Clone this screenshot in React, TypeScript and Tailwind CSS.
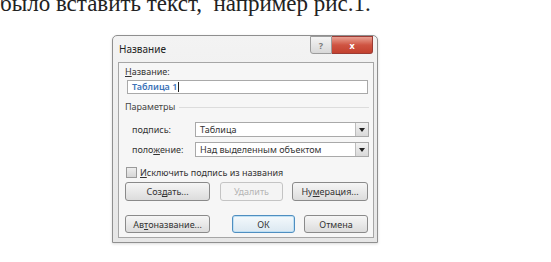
import type { ReactNode } from 'react';

const ui = { fontFamily: '"Noto Sans", "DejaVu Sans", sans-serif' };

function Btn({
  children,
  width,
  height,
  primary,
  disabled,
  ml,
}: {
  children: ReactNode;
  width: string;
  height: string;
  primary?: boolean;
  disabled?: boolean;
  ml?: string;
}) {
  return (
    <div
      className={[
        'flex items-center justify-center rounded-[3px] border text-[9px] leading-none',
        width,
        height,
        ml ?? '',
        primary
          ? 'border-[#4f8ec0] bg-gradient-to-b from-[#f4f9fc] to-[#dbe8f1] shadow-[inset_0_0_0_1px_#bfe0f4] text-[#333]'
          : disabled
          ? 'border-[#c4c4c4] bg-[#f4f4f4] text-[#b5b5b5]'
          : 'border-[#8a8a8a] bg-gradient-to-b from-[#f6f6f6] to-[#dcdcdc] text-[#333]',
      ].join(' ')}
    >
      {children}
    </div>
  );
}

function Select({ value }: { value: string }) {
  return (
    <div className="flex h-[15px] w-[174px] items-stretch border border-[#a9a9a9] bg-white">
      <span className="flex flex-1 items-center pl-[4px] text-[9px] leading-none text-[#333]">{value}</span>
      <span className="flex w-[13px] items-center justify-center border-l border-[#bdbdbd] bg-gradient-to-b from-[#f2f2f2] to-[#d9d9d9]">
        <span className="h-0 w-0 border-x-[3px] border-t-[4px] border-x-transparent border-t-[#222]" />
      </span>
    </div>
  );
}

export default function App() {
  return (
    <div className="relative h-[262px] w-[551px] overflow-hidden bg-white">
      {/* the line of document text above, cut by the top of the shot */}
      <div className="h-[20px] overflow-hidden">
        <div
          className="-mt-[8px] whitespace-pre text-[23px] leading-[23px] text-[#222]"
          style={{ fontFamily: '"Liberation Serif", "Times New Roman", serif' }}
        >
          было вставить текст,  например рис.1.
        </div>
      </div>

      {/* dialog */}
      <div
        className="ml-[112px] mt-[15px] flex h-[208px] w-[266px] flex-col rounded-t-[5px] border border-[#8f8f8f] bg-gradient-to-b from-[#f3f3f3] to-[#e6e6e6] shadow-[0_1px_3px_rgba(0,0,0,0.15)]"
        style={ui}
      >
        <div className="flex h-[26px] items-start">
          <span className="mt-[8px] pl-[6px] text-[10px] leading-none text-[#222]">Название</span>
          <div className="ml-auto mr-[4px] flex h-[18px]">
            <div className="flex w-[22px] items-center justify-center rounded-bl-[3px] border border-[#9c9c9c] bg-gradient-to-b from-[#f4f4f4] to-[#d8d8d8] text-[9px] font-bold leading-none text-[#7a7a7a]">
              ?
            </div>
            <div className="flex w-[41px] items-center justify-center rounded-br-[3px] border border-l-0 border-[#9b3b34] bg-gradient-to-b from-[#e8a093] via-[#cf5442] to-[#c2402e] text-[9px] font-bold leading-none text-white">
              x
            </div>
          </div>
        </div>

        {/* inner panel */}
        <div className="ml-[5px] flex h-[176px] w-[256px] flex-col border border-[#a6a6a6] bg-[#f6f6f6] text-[9px] leading-[10px] text-[#333]">
          <div className="mt-[4px] pl-[6px]">
            <u>Н</u>азвание:
          </div>
          <div className="ml-[8px] mt-[3px] flex h-[14px] w-[241px] items-center border border-[#a9a9a9] bg-white pl-[4px]">
            <span className="font-semibold text-[#3d73b8]">Таблица 1</span>
            <span className="ml-px h-[10px] w-px bg-[#222]" />
          </div>

          <div className="mt-[8px] flex items-center pl-[6px] pr-[4px]">
            <span className="text-[#444]">Параметры</span>
            <span className="ml-[4px] h-px flex-1 bg-[#dcdcdc]" />
          </div>

          <div className="mt-[10px] flex items-center pl-[13px]">
            <span className="w-[63px]">
              по<u>д</u>пись:
            </span>
            <Select value="Таблица" />
          </div>
          <div className="mt-[5px] flex items-center pl-[13px]">
            <span className="w-[63px]">
              поло<u>ж</u>ение:
            </span>
            <Select value="Над выделенным объектом" />
          </div>

          <div className="mt-[10px] flex items-center pl-[7px]">
            <span className="h-[11px] w-[11px] border border-[#9a9a9a] bg-gradient-to-b from-[#eeeeee] to-[#d6d6d6]" />
            <span className="ml-[3px]">
              <u>И</u>сключить подпись из названия
            </span>
          </div>

          <div className="mt-[4px] flex pl-[6px]">
            <Btn width="w-[85px]" height="h-[19px]">
              Соз<u>д</u>ать...
            </Btn>
            <Btn width="w-[63px]" height="h-[19px]" disabled ml="ml-[10px]">
              Удалить
            </Btn>
            <Btn width="w-[76px]" height="h-[19px]" ml="ml-[9px]">
              Ну<u>м</u>ерация...
            </Btn>
          </div>

          <div className="mt-[14px] flex pl-[6px]">
            <Btn width="w-[85px]" height="h-[18px]">
              Ав<u>т</u>оназвание...
            </Btn>
            <Btn width="w-[63px]" height="h-[18px]" primary ml="ml-[22px]">
              ОК
            </Btn>
            <Btn width="w-[64px]" height="h-[18px]" ml="ml-[9px]">
              Отмена
            </Btn>
          </div>
        </div>
      </div>
    </div>
  );
}
